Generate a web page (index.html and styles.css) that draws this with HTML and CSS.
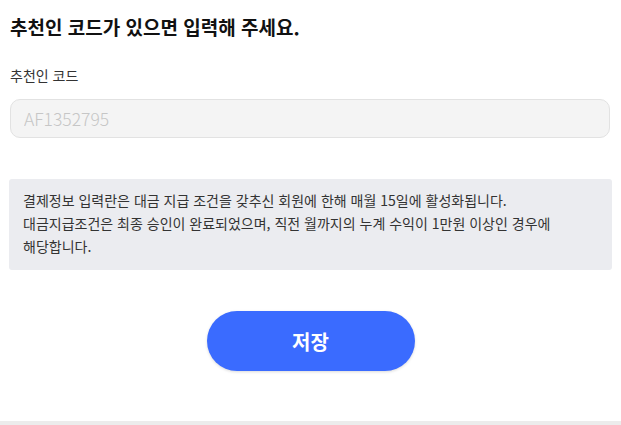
FILE: index.html
```html
<!DOCTYPE html>
<html lang="ko">
<head>
<meta charset="utf-8">
<link rel="stylesheet" href="styles.css">
</head>
<body>
<div class="page">
  <h1 class="title">추천인 코드가 있으면 입력해 주세요.</h1>
  <label class="label" for="code">추천인 코드</label>
  <input class="input" id="code" type="text" placeholder="AF1352795">
  <div class="info">
    <p>결제정보 입력란은 대금 지급 조건을 갖추신 회원에 한해 매월 15일에 활성화됩니다.</p>
    <p>대금지급조건은 최종 승인이 완료되었으며, 직전 월까지의 누계 수익이 1만원 이상인 경우에<br>해당합니다.</p>
  </div>
  <div class="actions">
    <button class="save" type="button">저장</button>
  </div>
</div>
<div class="footer-bar"></div>
</body>
</html>
```
FILE: styles.css
```css
* { box-sizing: border-box; }
html, body { margin: 0; padding: 0; background: #fff; }
body {
  font-family: "Noto Sans CJK KR", "Noto Sans", sans-serif;
  color: #222;
  width: 621px;
  height: 425px;
  overflow: hidden;
  display: flex;
  flex-direction: column;
}
.page {
  flex: 1;
  padding: 13px 10px 0 10px;
  display: flex;
  flex-direction: column;
}
.title {
  margin: 0;
  font-size: 19px;
  font-weight: 700;
  line-height: 28px;
  color: #111;
}
.label {
  margin-top: 24px;
  font-size: 14px;
  line-height: 20px;
  color: #333;
}
.input {
  margin-top: 14px;
  width: 600px;
  height: 39px;
  border: 1px solid #e2e2e2;
  border-radius: 10px;
  background: #f4f4f4;
  padding: 0 13px;
  font-family: inherit;
  font-size: 17.5px;
  font-weight: 300;
  color: #333;
  outline: none;
}
.input::placeholder { color: #c6c6c6; font-weight: 300; }
.info {
  margin: 41px 0 0 -1px;
  width: 603px;
  background: #ebecf0;
  border-radius: 3px;
  padding: 10px 14px 12px 14px;
  font-size: 14px;
  line-height: 23px;
  color: #333;
}
.info p { margin: 0; }
.actions {
  margin-top: 41px;
  display: flex;
  justify-content: center;
}
.save {
  width: 208px;
  height: 60px;
  border: none;
  border-radius: 30px;
  background: #3a6bff;
  color: #fff;
  font-family: inherit;
  font-size: 20px;
  font-weight: 700;
  box-shadow: 0 1px 3px rgba(0,0,0,0.15);
  cursor: pointer;
}
.footer-bar {
  height: 4px;
  background: #ececec;
}
```
